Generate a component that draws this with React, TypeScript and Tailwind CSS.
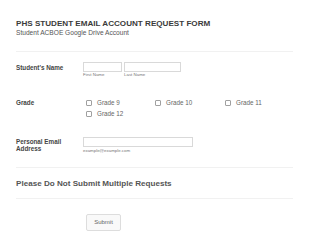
import React from "react";

const grades = ["Grade 9", "Grade 10", "Grade 11", "Grade 12"];

const Checkbox: React.FC<{ label: string }> = ({ label }) => (
  <label className="flex items-center gap-[5px] h-[11px]">
    <span className="w-[6px] h-[6px] border border-[#a0a0a0] rounded-[1px] bg-white" />
    <span>{label}</span>
  </label>
);

const App: React.FC = () => {
  return (
    <div className="w-[310px] h-[247px] bg-white font-['Liberation_Sans',Arial,sans-serif] text-[#555] overflow-hidden">
      <div className="pl-[16px] pr-[17px] pt-[19px]">
        <h1 className="text-[8.1px] leading-[10px] font-bold text-[#3a3a3a]">
          PHS STUDENT EMAIL ACCOUNT REQUEST FORM
        </h1>
        <p className="text-[6.6px] leading-[8px] text-[#555]">
          Student ACBOE Google Drive Account
        </p>
        <div className="mt-[14px] border-t border-[#f1f1f1]" />

        <div className="flex mt-[10px]">
          <div className="w-[67px] text-[6.3px] font-bold text-[#444] pt-[1px]">
            Student's Name
          </div>
          <div className="flex gap-[2px]">
            <div className="flex flex-col">
              <div className="w-[39px] h-[10px] border border-[#d9d9d9]" />
              <span className="text-[4.4px] leading-[6px] text-[#777]">First Name</span>
            </div>
            <div className="flex flex-col">
              <div className="w-[57px] h-[10px] border border-[#d9d9d9]" />
              <span className="text-[4.4px] leading-[6px] text-[#777]">Last Name</span>
            </div>
          </div>
        </div>

        <div className="flex mt-[19px]">
          <div className="w-[67px] text-[6.3px] font-bold text-[#444] pt-[1px]">Grade</div>
          <div className="grid grid-cols-[69px_70px_auto] text-[6.3px] text-[#666] pl-[3px]">
            {grades.map((g) => (
              <Checkbox key={g} label={g} />
            ))}
          </div>
        </div>

        <div className="flex mt-[18px]">
          <div className="w-[67px] text-[6.3px] leading-[7px] font-bold text-[#444] pt-[1px]">
            Personal Email
            <br />
            Address
          </div>
          <div className="flex flex-col">
            <div className="w-[110px] h-[10px] border border-[#d9d9d9]" />
            <span className="text-[4.4px] leading-[7px] text-[#777]">example@example.com</span>
          </div>
        </div>

        <div className="mt-[13px] border-t border-[#f1f1f1]" />

        <h2 className="mt-[11px] text-[8.1px] leading-[10px] font-bold text-[#555]">
          Please Do Not Submit Multiple Requests
        </h2>

        <div className="mt-[9px] border-t border-[#f1f1f1]" />

        <div className="pl-[70px] mt-[8px]">
          <button className="w-[35px] h-[17px] border border-[#ddd] rounded-[2px] bg-[#f9f9f9] text-[6px] text-[#666]">
            Submit
          </button>
        </div>
      </div>
    </div>
  );
};

export default App;
